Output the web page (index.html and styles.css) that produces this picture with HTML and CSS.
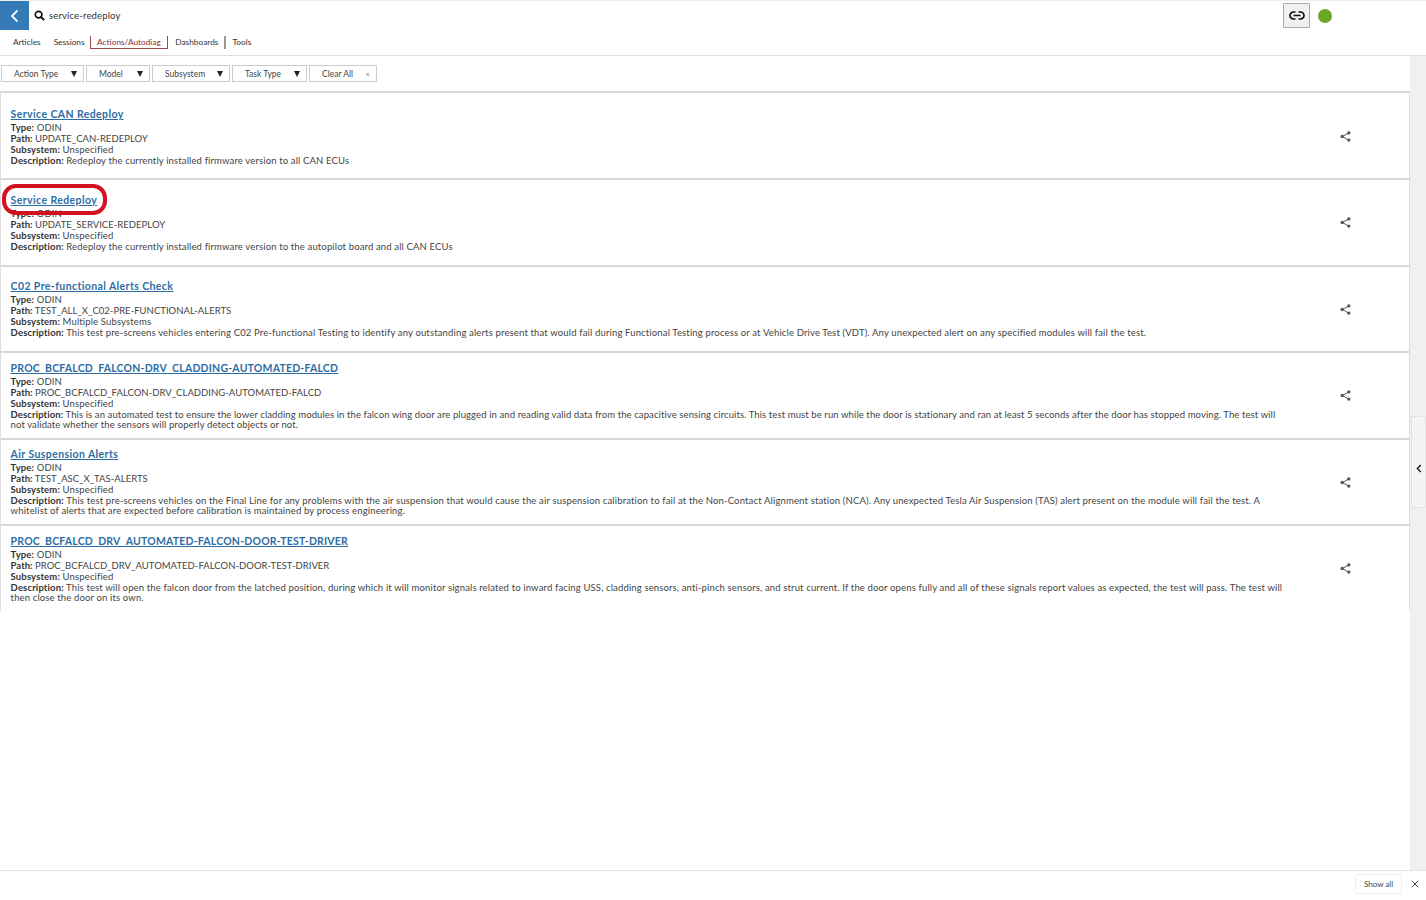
FILE: index.html
```html
<!DOCTYPE html>
<html lang="en">
<head>
<meta charset="utf-8">
<title>service-redeploy</title>
<link rel="stylesheet" href="styles.css">
</head>
<body>
<div class="page">
  <header class="header">
    <div class="searchbar">
      <button class="back" aria-label="Back"><svg width="12" height="14" viewBox="0 0 12 14"><path d="M8.500 1.500 3 7l5.500 5.500" fill="none" stroke="#fff" stroke-width="1.800"/></svg></button>
      <svg class="search-icon" width="11" height="11" viewBox="0 0 11 11"><circle cx="4.600" cy="4.600" r="3.300" fill="none" stroke="#111" stroke-width="1.700"/><path d="M7 7l3.200 3.200" stroke="#111" stroke-width="1.900"/></svg>
      <span class="query">service-redeploy</span>
      <div class="header-right">
        <button class="link-btn" aria-label="Copy link"><svg width="16" height="9" viewBox="0 0 16 9"><path d="M6.500 1H4.500a3.500 3.500 0 0 0 0 7h2M9.500 1h2a3.500 3.500 0 0 1 0 7h-2M4.500 4.500h7" fill="none" stroke="#111" stroke-width="1.700"/></svg></button>
        <span class="status"></span>
      </div>
    </div>
    <nav class="tabs">
      <a class="tab">Articles</a>
      <a class="tab tab-sessions">Sessions</a>
      <a class="tab active">Actions/Autodiag</a>
      <a class="tab tab-dash">Dashboards</a>
      <a class="tab tab-tools">Tools</a>
    </nav>
  </header>
  <div class="body">
    <main class="content">
      <div class="filters">
        <div class="filter f1"><span>Action Type</span><i class="caret"></i></div>
        <div class="filter f2"><span>Model</span><i class="caret"></i></div>
        <div class="filter f3"><span>Subsystem</span><i class="caret"></i></div>
        <div class="filter f4"><span>Task Type</span><i class="caret"></i></div>
        <div class="filter f5"><span>Clear All</span><b class="clear-x">×</b></div>
      </div>
      <div class="results">
        <article class="row single">
          <div class="info">
            <a class="title mixed">Service CAN Redeploy</a>
            <p><b>Type:</b> ODIN</p>
            <p class="caps"><b>Path:</b> UPDATE_CAN-REDEPLOY</p>
            <p><b>Subsystem:</b> Unspecified</p>
            <p><b>Description:</b> Redeploy the currently installed firmware version to all CAN ECUs</p>
          </div>
          <svg class="share" width="11" height="11" viewBox="0 0 11 11"><path d="M8.500 2 2.500 5.500l6 3.500" fill="none" stroke="#555" stroke-width="1"/><circle cx="8.800" cy="1.900" r="1.700" fill="#555"/><circle cx="2.200" cy="5.500" r="1.700" fill="#555"/><circle cx="8.800" cy="9.100" r="1.700" fill="#555"/></svg>
        </article>
        <article class="row single">
          <div class="info">
            <a class="title mixed">Service Redeploy</a>
            <p><b>Type:</b> ODIN</p>
            <p class="caps"><b>Path:</b> UPDATE_SERVICE-REDEPLOY</p>
            <p><b>Subsystem:</b> Unspecified</p>
            <p><b>Description:</b> Redeploy the currently installed firmware version to the autopilot board and all CAN ECUs</p>
          </div>
          <svg class="share" width="11" height="11" viewBox="0 0 11 11"><path d="M8.500 2 2.500 5.500l6 3.500" fill="none" stroke="#555" stroke-width="1"/><circle cx="8.800" cy="1.900" r="1.700" fill="#555"/><circle cx="2.200" cy="5.500" r="1.700" fill="#555"/><circle cx="8.800" cy="9.100" r="1.700" fill="#555"/></svg>
          <span class="callout"></span>
        </article>
        <article class="row single">
          <div class="info">
            <a class="title mixed">C02 Pre-functional Alerts Check</a>
            <p><b>Type:</b> ODIN</p>
            <p class="caps"><b>Path:</b> TEST_ALL_X_C02-PRE-FUNCTIONAL-ALERTS</p>
            <p><b>Subsystem:</b> Multiple Subsystems</p>
            <p class="wide"><b>Description:</b> This test pre-screens vehicles entering C02 Pre-functional Testing to identify any outstanding alerts present that would fail during Functional Testing process or at Vehicle Drive Test (VDT). Any unexpected alert on any specified modules will fail the test.</p>
          </div>
          <svg class="share" width="11" height="11" viewBox="0 0 11 11"><path d="M8.500 2 2.500 5.500l6 3.500" fill="none" stroke="#555" stroke-width="1"/><circle cx="8.800" cy="1.900" r="1.700" fill="#555"/><circle cx="2.200" cy="5.500" r="1.700" fill="#555"/><circle cx="8.800" cy="9.100" r="1.700" fill="#555"/></svg>
        </article>
        <article class="row">
          <div class="info">
            <a class="title">PROC_BCFALCD_FALCON-DRV_CLADDING-AUTOMATED-FALCD</a>
            <p><b>Type:</b> ODIN</p>
            <p class="caps"><b>Path:</b> PROC_BCFALCD_FALCON-DRV_CLADDING-AUTOMATED-FALCD</p>
            <p><b>Subsystem:</b> Unspecified</p>
            <p class="desc tight"><b>Description:</b> This is an automated test to ensure the lower cladding modules in the falcon wing door are plugged in and reading valid data from the capacitive sensing circuits. This test must be run while the door is stationary and ran at least 5 seconds after the door has stopped moving. The test will not validate whether the sensors will properly detect objects or not.</p>
          </div>
          <svg class="share" width="11" height="11" viewBox="0 0 11 11"><path d="M8.500 2 2.500 5.500l6 3.500" fill="none" stroke="#555" stroke-width="1"/><circle cx="8.800" cy="1.900" r="1.700" fill="#555"/><circle cx="2.200" cy="5.500" r="1.700" fill="#555"/><circle cx="8.800" cy="9.100" r="1.700" fill="#555"/></svg>
        </article>
        <article class="row">
          <div class="info">
            <a class="title mixed">Air Suspension Alerts</a>
            <p><b>Type:</b> ODIN</p>
            <p class="caps"><b>Path:</b> TEST_ASC_X_TAS-ALERTS</p>
            <p><b>Subsystem:</b> Unspecified</p>
            <p class="desc wider"><b>Description:</b> This test pre-screens vehicles on the Final Line for any problems with the air suspension that would cause the air suspension calibration to fail at the Non-Contact Alignment station (NCA). Any unexpected Tesla Air Suspension (TAS) alert present on the module will fail the test. A whitelist of alerts that are expected before calibration is maintained by process engineering.</p>
          </div>
          <svg class="share" width="11" height="11" viewBox="0 0 11 11"><path d="M8.500 2 2.500 5.500l6 3.500" fill="none" stroke="#555" stroke-width="1"/><circle cx="8.800" cy="1.900" r="1.700" fill="#555"/><circle cx="2.200" cy="5.500" r="1.700" fill="#555"/><circle cx="8.800" cy="9.100" r="1.700" fill="#555"/></svg>
        </article>
        <article class="row">
          <div class="info">
            <a class="title">PROC_BCFALCD_DRV_AUTOMATED-FALCON-DOOR-TEST-DRIVER</a>
            <p><b>Type:</b> ODIN</p>
            <p class="caps"><b>Path:</b> PROC_BCFALCD_DRV_AUTOMATED-FALCON-DOOR-TEST-DRIVER</p>
            <p><b>Subsystem:</b> Unspecified</p>
            <p class="desc"><b>Description:</b> This test will open the falcon door from the latched position, during which it will monitor signals related to inward facing USS, cladding sensors, anti-pinch sensors, and strut current. If the door opens fully and all of these signals report values as expected, the test will pass. The test will then close the door on its own.</p>
          </div>
          <svg class="share" width="11" height="11" viewBox="0 0 11 11"><path d="M8.500 2 2.500 5.500l6 3.500" fill="none" stroke="#555" stroke-width="1"/><circle cx="8.800" cy="1.900" r="1.700" fill="#555"/><circle cx="2.200" cy="5.500" r="1.700" fill="#555"/><circle cx="8.800" cy="9.100" r="1.700" fill="#555"/></svg>
        </article>
      </div>
    </main>
    <aside class="rail">
      <button class="rail-toggle" aria-label="Expand"><svg width="6" height="9" viewBox="0 0 6 9"><path d="M4.800 1 1.300 4.500l3.500 3.500" fill="none" stroke="#111" stroke-width="1.300"/></svg></button>
    </aside>
  </div>
  <footer class="footer">
    <button class="show-all">Show all</button>
    <svg class="close" width="8" height="8" viewBox="0 0 8 8"><path d="M.7.700l6.600 6.600M7.300.700.700 7.300" stroke="#444" stroke-width="1"/></svg>
  </footer>
</div>
</body>
</html>
```

FILE: styles.css
```css
* { box-sizing: border-box; }
html, body { margin: 0; height: 100%; }
body {
  font-family: "Lato", "Open Sans", "Liberation Sans", sans-serif;
  font-size: 9.500px;
  color: #444;
  background: #fff;
  overflow: hidden;
}
.page { height: 900px; display: flex; flex-direction: column; }
.header { height: 56px; border-bottom: 1px solid #ddd; border-top: 1px solid #eee; flex: none; }
.searchbar { display: flex; align-items: center; height: 29px; }
.back {
  width: 29px; height: 29px; border: 0; padding: 0; background: #337ab7;
  display: flex; align-items: center; justify-content: center;
}
.search-icon { margin-left: 5px; }
.query { margin-left: 4px; font-size: 9.500px; color: #333; letter-spacing: .15px; }
.header-right { margin-left: auto; display: flex; align-items: center; gap: 8px; padding-right: 94px; }
.link-btn {
  width: 27px; height: 25px; padding: 0; background: #f0f0f0; border: 1px solid #aaa; border-radius: 1px;
  display: flex; align-items: center; justify-content: center;
}
.status { width: 14px; height: 14px; border-radius: 50%; background: #6aa823; }
.tabs { display: flex; align-items: center; height: 26px; padding: 0 0 2px 6px; color: #333; font-size: 8.300px; }
.tab { padding: 0 6px 0 7px; height: 13px; line-height: 13px; }
.tab-sessions { padding-right: 5px; }
.active { color: #8c2f33; border: 1px solid #9b4a4e; border-top: 0; line-height: 12px; padding: 0 6.500px; }
.tab-dash { border-right: 2px solid #999; padding-right: 6px; }
.tab-tools { padding-left: 6px; }
.body { flex: 1; display: flex; min-height: 0; }
.content { flex: 1; min-width: 0; }
.filters { display: flex; gap: 2px; height: 35px; padding: 9px 0 0 1px; }
.filter {
  height: 17px; display: flex; align-items: center; justify-content: space-between;
  border: 1px solid #ccc; background: #fff; color: #444; font-size: 8.500px; padding: 0 6px 0 12px;
}
.f1 { width: 83px; }
.f2 { width: 64px; }
.f3 { width: 78px; }
.f4 { width: 75px; }
.f5 { width: 68px; }
.caret { width: 0; height: 0; border: 3.500px solid transparent; border-top: 6px solid #222; border-bottom: 0; }
.clear-x { font-weight: 400; color: #888; font-size: 8px; }
.row {
  position: relative; height: 86.500px; display: flex; align-items: center;
  border-top: 2px solid #d8d8d8; border-left: 1px solid #ddd; border-right: 1px solid #ddd;
  padding-left: 9.600px;
}
.row:first-child { height: 87px; }
.info { width: 1280px; line-height: 11px; margin-top: 1px; }
.row:first-child .info { margin-top: 3px; }
.title {
  display: block; color: #2e6da4; font-weight: 700; font-size: 10.500px; line-height: 13px;
  text-decoration: underline; margin-bottom: 1px; letter-spacing: .2px;
}
.mixed { letter-spacing: .4px; }
.info p { margin: 0; letter-spacing: .14px; }
.info .caps { letter-spacing: .03px; }
.info .wide { letter-spacing: .15px; }
.info .wider { letter-spacing: .155px; }
.info .tight { letter-spacing: .1px; }
.info .desc { line-height: 10px; margin-top: 1px; }
.info b { color: #333; }
.share { position: absolute; left: 1339px; top: 37px; }
.row:first-child .share { top: 38px; }
.callout {
  position: absolute; left: 1px; top: 4px; width: 105px; height: 31px;
  border: 4px solid #d3111f; border-radius: 14px; background: transparent;
}
.rail { width: 16px; background: #f0f0f0; flex: none; position: relative; }
.rail-toggle {
  position: absolute; left: 1px; top: 360px; width: 15px; height: 92px; padding: 12px 0 0;
  background: #f4f4f4; border: 1px solid #e4e4e4; display: flex; align-items: center; justify-content: center;
}
.footer {
  height: 30px; flex: none; border-top: 1px solid #e2e2e2; display: flex; align-items: center; justify-content: flex-end;
  padding: 0 7px 3px 0; gap: 9px;
}
.show-all {
  width: 47px; height: 20px; padding: 0; background: #fff; border: 1px solid #eee; border-radius: 2px;
  font: 8px "Lato", sans-serif; color: #444;
}
```
